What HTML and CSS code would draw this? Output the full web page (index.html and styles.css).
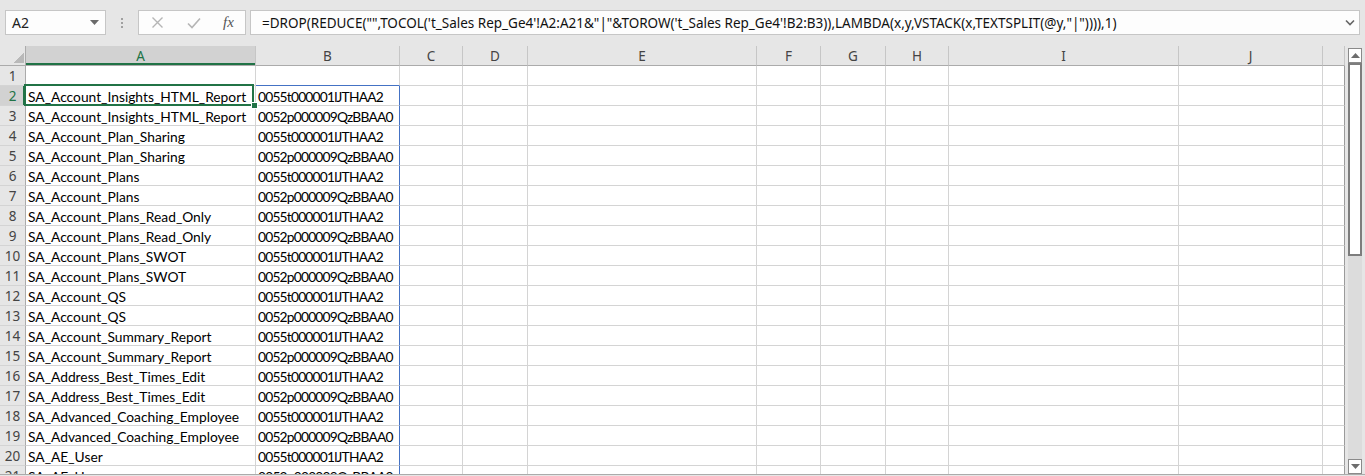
FILE: index.html
```html
<!DOCTYPE html>
<html lang="en">
<head>
    <meta charset="UTF-8">
    <title>Book1 - Excel</title>
    <link rel="stylesheet" href="styles.css">
</head>
<body>
<!-- Formula bar -->
<div class="toolbar">
    <div class="name-box">
        <span>A2</span>
        <svg width="9" height="5" viewBox="0 0 9 5"><path d="M0 0h9L4.5 5z" fill="#6a6a6a"/></svg>
    </div>
    <div class="grip"><span></span><span></span><span></span></div>
    <div class="fx-buttons">
        <svg width="13" height="13" viewBox="0 0 13 13"><path d="M1.5 1.5l10 10M11.5 1.5l-10 10" stroke="#b5b5b5" stroke-width="1.4" fill="none"/></svg>
        <svg width="14" height="12" viewBox="0 0 14 12"><path d="M1 6.5l4 4L13 1.5" stroke="#b5b5b5" stroke-width="1.6" fill="none"/></svg>
        <span class="fx">fx</span>
    </div>
    <div class="formula">
        <span class="formula-text">=DROP(REDUCE("",TOCOL('t_Sales Rep_Ge4'!A2:A21&amp;"|"&amp;TOROW('t_Sales Rep_Ge4'!B2:B3)),LAMBDA(x,y,VSTACK(x,TEXTSPLIT(@y,"|")))),1)</span>
        <svg width="10" height="7" viewBox="0 0 10 7"><path d="M1 1.5l4 4 4-4" stroke="#666" stroke-width="1.6" fill="none"/></svg>
    </div>
</div>

<!-- Worksheet -->
<div class="sheet-area">
    <div class="sheet" id="sheet">
        <div class="active-cell"></div>
        <div class="fill-handle"></div>
    </div>
    <div class="vscroll">
        <div class="sb-btn"><svg width="9" height="5" viewBox="0 0 9 5"><path d="M0 5h9L4.5 0z" fill="#6d6d6d"/></svg></div>
        <div class="sb-thumb"></div>
        <div class="sb-space"></div>
        <div class="sb-btn"><svg width="9" height="5" viewBox="0 0 9 5"><path d="M0 0h9L4.5 5z" fill="#6d6d6d"/></svg></div>
    </div>
</div>
<div class="bottom-strip"></div>

<script>
    const columns = ['A', 'B', 'C', 'D', 'E', 'F', 'G', 'H', 'I', 'J', ''];
    const ids = ['0055t000001lJTHAA2', '0052p000009QzBBAA0'];
    const names = [
        'SA_Account_Insights_HTML_Report',
        'SA_Account_Plan_Sharing',
        'SA_Account_Plans',
        'SA_Account_Plans_Read_Only',
        'SA_Account_Plans_SWOT',
        'SA_Account_QS',
        'SA_Account_Summary_Report',
        'SA_Address_Best_Times_Edit',
        'SA_Advanced_Coaching_Employee',
        'SA_AE_User'
    ];

    const sheet = document.getElementById('sheet');

    function addCell(cls, text) {
        const cell = document.createElement('div');
        cell.className = cls;
        cell.textContent = text || '';
        sheet.appendChild(cell);
        return cell;
    }

    // Header row
    addCell('corner', '');
    columns.forEach(col => {
        addCell(col === 'A' ? 'hd hd-active' : 'hd', col);
    });

    // Data rows (row 1 empty, rows 2-21 from the spill)
    for (let r = 1; r <= 21; r++) {
        addCell(r === 2 ? 'rh rh-active' : 'rh', r);
        columns.forEach(col => {
            let cls = 'cell';
            let text = '';
            if (r >= 2 && col === 'A') {
                text = names[Math.floor((r - 2) / 2)];
            }
            if (r >= 2 && col === 'B') {
                text = ids[(r - 2) % 2];
                cls += ' id spill-right';
            }
            if (r === 1 && col === 'B') cls += ' spill-top';
            if (col === '') cls += ' last';
            addCell(cls, text);
        });
    }
</script>
</body>
</html>
```

FILE: styles.css
```css
/* General */
body {
    margin: 0;
    width: 1365px;
    height: 476px;
    overflow: hidden;
    background-color: #e6e6e6;
    font-family: "Noto Sans", sans-serif;
}

/* Formula bar */
.toolbar {
    height: 46px;
    box-sizing: border-box;
    padding: 10px 0 0 5px;
    display: flex;
    align-items: flex-start;
}

.name-box {
    width: 101px;
    height: 25px;
    box-sizing: border-box;
    background-color: #fdfdfd;
    border: 1px solid #c6c6c6;
    display: flex;
    align-items: center;
    justify-content: space-between;
    padding: 0 6px 0 6px;
    font-size: 14px;
    color: #222;
}

.grip {
    width: 32px;
    height: 25px;
    display: flex;
    flex-direction: column;
    align-items: center;
    justify-content: center;
    gap: 2px;
}

.grip span {
    width: 2px;
    height: 2px;
    background-color: #a0a0a0;
}

.fx-buttons {
    width: 108px;
    height: 25px;
    box-sizing: border-box;
    background-color: #fdfdfd;
    border: 1px solid #c6c6c6;
    display: flex;
    align-items: center;
    padding-left: 12px;
    gap: 23px;
}

.fx {
    font-family: "Liberation Serif", serif;
    font-style: italic;
    font-size: 15px;
    color: #555;
    margin-left: -1px;
}

.formula {
    width: 1110px;
    height: 25px;
    margin-left: 4px;
    box-sizing: border-box;
    background-color: #fdfdfd;
    border: 1px solid #c6c6c6;
    display: flex;
    align-items: center;
    justify-content: space-between;
    padding: 0 4px 0 11px;
}

.formula-text {
    font-size: 13.5px;
    color: #111;
    white-space: nowrap;
}

/* Worksheet grid */
.sheet-area {
    height: 428px;
    display: flex;
}

.sheet {
    position: relative;
    width: 1345px;
    overflow: hidden;
    display: grid;
    grid-template-columns: 26px 230px 144px 63px 65px 229px 64px 65px 63px 230px 144px 22px;
    grid-auto-rows: 20px;
    background-color: #fff;
}

.corner,
.hd,
.rh,
.cell {
    box-sizing: border-box;
    white-space: nowrap;
    overflow: hidden;
}

.corner {
    background-color: #e6e6e6;
    border-right: 1px solid #ababab;
    border-bottom: 1px solid #ababab;
    background-image: linear-gradient(135deg, transparent 60%, #b9b9b9 60%);
    background-size: 13px 13px;
    background-repeat: no-repeat;
    background-position: 11px 4px;
}

.hd {
    background-color: #e6e6e6;
    border-right: 1px solid #c6c6c6;
    border-bottom: 1px solid #ababab;
    text-align: center;
    font-size: 13.5px;
    line-height: 20px;
    color: #444;
}

.hd-active {
    background-color: #d2d2d2;
    color: #217346;
    box-shadow: inset 0 -2px 0 #217346;
}

.rh {
    background-color: #e6e6e6;
    border-right: 1px solid #ababab;
    border-bottom: 1px solid #d4d4d4;
    text-align: center;
    font-size: 13.5px;
    line-height: 20px;
    color: #444;
}

.rh-active {
    background-color: #d2d2d2;
    color: #217346;
    box-shadow: inset -2px 0 0 #217346;
}

.cell {
    border-right: 1px solid #d4d4d4;
    border-bottom: 1px solid #d4d4d4;
    font-family: Lato, sans-serif;
    font-size: 13.8px;
    line-height: 21px;
    padding-left: 2px;
    color: #000;
}

.cell.id {
    letter-spacing: -0.8px;
}

.cell.last {
    border-right-color: #9b9b9b;
}

.spill-right {
    border-right-color: #4472c4;
}

.spill-top {
    border-bottom-color: #4472c4;
}

.active-cell {
    position: absolute;
    left: 24px;
    top: 38px;
    width: 230px;
    height: 22px;
    box-sizing: border-box;
    border: 2px solid #217346;
}

.fill-handle {
    position: absolute;
    left: 251px;
    top: 56px;
    width: 7px;
    height: 7px;
    box-sizing: border-box;
    background-color: #217346;
    border: 1px solid #fff;
}

/* Vertical scrollbar */
.vscroll {
    width: 20px;
    box-sizing: border-box;
    padding: 2px 3px 0 3px;
    display: flex;
    flex-direction: column;
}

.sb-btn {
    height: 15px;
    box-sizing: border-box;
    background-color: #fff;
    border: 1px solid #8a8a8a;
    display: flex;
    align-items: center;
    justify-content: center;
}

.sb-thumb {
    height: 193px;
    box-sizing: border-box;
    background-color: #fff;
    border: 2px solid #7d7d7d;
}

.sb-space {
    flex: 1;
    background-color: #dcdcdc;
}

.bottom-strip {
    height: 2px;
    box-sizing: border-box;
    border-top: 1px solid #ababab;
}
```
